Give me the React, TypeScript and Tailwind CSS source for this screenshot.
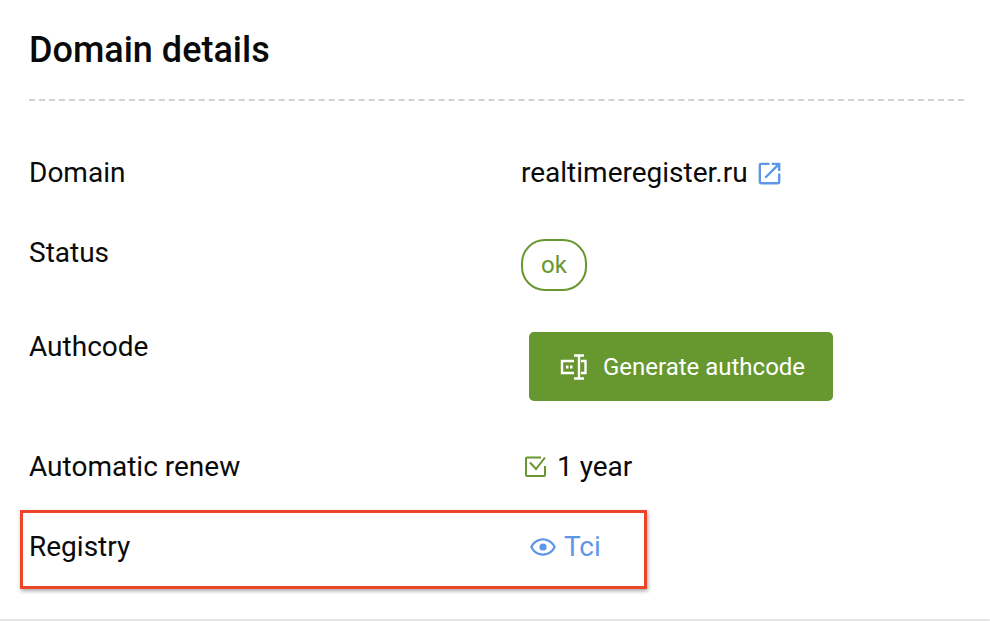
import { MdOpenInNew } from 'react-icons/md';

const font = { fontFamily: 'Roboto, sans-serif' };

function AuthcodeIcon() {
  return (
    <svg width="28" height="28" viewBox="0 0 28 28" fill="none" stroke="currentColor" strokeWidth="2.4">
      <path d="M15 8H3v12h12M22 8h4.500v12H22" />
      <path d="M20 1.500v25M15 2.500h10M15 25.500h10" />
      <path d="M7 14h2.500M11 14h2.500" strokeWidth="3" />
    </svg>
  );
}

function CheckIcon() {
  return (
    <svg width="22" height="22" viewBox="0 0 22 22" fill="none" stroke="currentColor" strokeWidth="2">
      <path d="M20 10v9a1 1 0 0 1-1 1H2a1 1 0 0 1-1-1V2.500a1 1 0 0 1 1-1h14" />
      <path d="M5 6.500l6 6.500 9-11.500" />
    </svg>
  );
}

function EyeIcon() {
  return (
    <svg width="28" height="28" viewBox="0 0 24 24" fill="currentColor">
      <path d="M12 6.500c3.790 0 7.170 2.130 8.820 5.500-1.650 3.370-5.020 5.500-8.820 5.500S4.830 15.370 3.180 12C4.830 8.630 8.210 6.500 12 6.500m0-2C7 4.500 2.730 7.610 1 12c1.730 4.390 6 7.500 11 7.500s9.270-3.110 11-7.500c-1.730-4.390-6-7.500-11-7.500z" />
      <circle cx="12" cy="12" r="3.100" />
    </svg>
  );
}

function Row({ label, className, children }: { label: string; className: string; children: React.ReactNode }) {
  return (
    <div className={`grid grid-cols-[492px_1fr] ${className}`}>
      <div className="text-[28px] leading-[32px] text-[#0a0a0a]">{label}</div>
      <div>{children}</div>
    </div>
  );
}

export default function App() {
  return (
    <div style={font} className="relative h-[622px] w-[990px] overflow-hidden bg-white">
      <div className="h-[619px] px-[29px] pt-[28px]">
        <h1 className="text-[36px] leading-[44px] font-medium text-[#0a0a0a]">Domain details</h1>
        <div className="mt-[27px] w-[935px] border-t-2 border-dashed border-[#d0d0d8]" />

        <Row label="Domain" className="mt-[56px]">
          <div className="flex items-center text-[28px] leading-[32px] text-[#0a0a0a]">
            realtimeregister.ru
            <MdOpenInNew className="ml-[7px] text-[#5f97e8]" size={29} />
          </div>
        </Row>

        <Row label="Status" className="mt-[48px]">
          <span className="mt-[2px] flex h-[52px] w-[66px] items-center justify-center rounded-[24px] border-2 border-[#67972f] text-[24px] text-[#67972f]">
            ok
          </span>
        </Row>

        <Row label="Authcode" className="mt-[40px]">
          <button className="mt-[1px] ml-[8px] flex h-[69px] w-[304px] items-center justify-center gap-[16px] rounded-[5px] bg-[#67972f] pl-[2px] text-[24px] text-white">
            <AuthcodeIcon />
            Generate authcode
          </button>
        </Row>

        <Row label="Automatic renew" className="mt-[50px]">
          <div className="flex items-center gap-[10px] text-[28px] leading-[32px] text-[#0a0a0a]">
            <span className="ml-[4px] text-[#67972f]"><CheckIcon /></span>
            1 year
          </div>
        </Row>

        <Row label="Registry" className="mt-[48px]">
          <div className="ml-[8px] flex items-center gap-[7px] text-[28px] leading-[32px] text-[#5f97e8]">
            <EyeIcon />
            Tci
          </div>
        </Row>
      </div>
      <div className="h-[2px] rounded-sm bg-[#e4e4e4]" />
      <div className="absolute top-[510px] left-[20px] h-[79px] w-[627px] border-[3px] border-[#ee4427] shadow-[1px_2px_4px_rgba(0,0,0,0.35)]" />
    </div>
  );
}
